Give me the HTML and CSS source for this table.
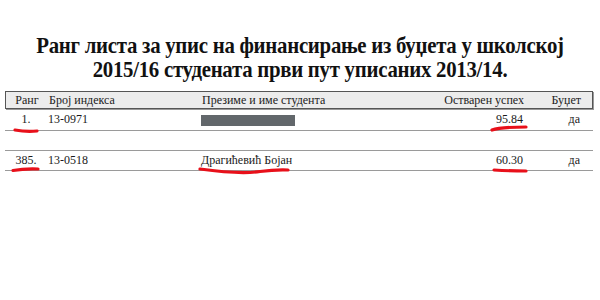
FILE: index.html
```html
<!DOCTYPE html>
<html lang="sr">
<head>
<meta charset="utf-8">
<title>Ранг листа</title>
<link rel="stylesheet" href="styles.css">
</head>
<body>
<div class="page">
  <h1 class="title">Ранг листа за упис на финансирање из буџета у школској<br>2015/16 студената први пут уписаних 2013/14.</h1>
  <div class="table">
    <div class="row head">
      <div class="c rank">Ранг</div>
      <div class="c idx">Број индекса</div>
      <div class="c name">Презиме и име студента</div>
      <div class="c score">Остварен успех</div>
      <div class="c bud">Буџет</div>
    </div>
    <div class="row r1">
      <div class="c rank">1.</div>
      <div class="c idx">13-0971</div>
      <div class="c name"><span class="redact"></span></div>
      <div class="c score">95.84</div>
      <div class="c bud">да</div>
    </div>
    <div class="row r2">
      <div class="c rank">385.</div>
      <div class="c idx">13-0518</div>
      <div class="c name">Драгићевић Бојан</div>
      <div class="c score">60.30</div>
      <div class="c bud">да</div>
    </div>
  </div>
  <svg class="marks" width="600" height="300" viewBox="0 0 600 300" aria-hidden="true">
    <path d="M15 130 Q26 132 37 131" />
    <path d="M492 130 Q500 127 526 127" />
    <path d="M13 170.5 Q24 168.5 38 169" />
    <path d="M200 169 Q240 174.5 260 171.5 Q275 169.5 288 170" />
    <path d="M494 170 Q510 171 526 171" />
  </svg>
</div>
</body>
</html>
```
FILE: styles.css
```css
html, body {
  margin: 0;
  padding: 0;
  background: #ffffff;
}
.page {
  position: relative;
  width: 600px;
  height: 300px;
  overflow: hidden;
  font-family: "Liberation Serif", "Times New Roman", serif;
  color: #1a1a1a;
}
.title {
  margin: 0;
  padding-top: 34px;
  font-size: 23px;
  line-height: 24px;
  font-weight: bold;
  text-align: center;
  color: #111;
  letter-spacing: -0.3px;
  transform: scaleX(0.905);
  transform-origin: 300px 0;
}
.table {
  margin: 9px 0 0 5px;
  width: 588px;
}
.row {
  display: grid;
  grid-template-columns: 42px 154px 229px 93px 70px;
  font-size: 12px;
  align-items: center;
}
.head {
  height: 16px;
  background: #ececec;
  border: 1px solid #555;
  box-shadow: 1px 1px 0 #999;
  box-sizing: content-box;
  color: #222;
}
.r1 {
  height: 21px;
  border-bottom: 1px solid #9a9a9a;
}
.r2 {
  height: 19px;
  margin-top: 19px;
  border-top: 1px solid #9a9a9a;
  border-bottom: 1px solid #9a9a9a;
}
.c {
  white-space: nowrap;
}
.rank {
  text-align: center;
}
.idx {
  padding-left: 1px;
}
.score {
  text-align: right;
}
.bud {
  text-align: right;
  padding-right: 13px;
}
.redact {
  display: block;
  width: 94px;
  height: 11px;
  background: #62676b;
  margin-top: 1px;
}
.marks {
  position: absolute;
  left: 0;
  top: 0;
  pointer-events: none;
}
.marks path {
  fill: none;
  stroke: #e8101a;
  stroke-width: 3.2;
  stroke-linecap: round;
}
```
